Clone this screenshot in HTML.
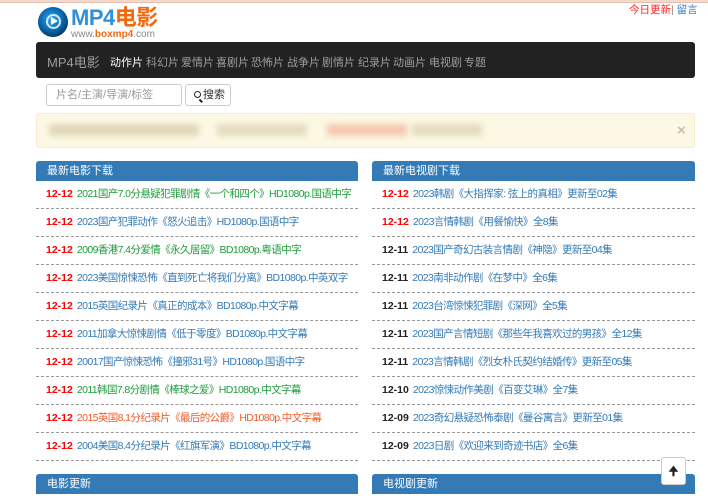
<!DOCTYPE html>
<html><head><meta charset="utf-8"><style>
*{margin:0;padding:0;box-sizing:border-box}
body{width:708px;height:500px;overflow:hidden;background:#fff;font-family:"Liberation Sans","Noto Sans CJK SC",sans-serif;font-size:11px;position:relative}
.topline{position:absolute;left:0;top:0;width:708px;height:3px;background:#f3d8cc;border-bottom:1px solid #e8c0b0}
.abs{position:absolute}
.nav{left:36px;top:42px;width:659px;height:36px;background:#222;border-radius:3px;color:#9d9d9d;font-size:11px}
.nav span{position:absolute;top:12px}
.panel{position:absolute;}
.ph{height:20px;background:#337ab7;color:#fff;border-radius:3px 3px 0 0;padding-left:11px;line-height:20px;font-size:11px}
.row{height:28px;border-bottom:1px dashed #999;line-height:27px;padding-left:10px;white-space:nowrap;font-size:10.5px;letter-spacing:-0.6px}
.d{font-weight:bold;color:#f00;margin-right:4px;letter-spacing:0}
.k{color:#222}
.g{color:#1f9c3c}.b{color:#337ab7}.o{color:#f05a28}
</style></head><body>
<div class="topline"></div>
<div class="abs" style="left:38px;top:7px;width:30px;height:30px;border-radius:50%;background:radial-gradient(circle at 45% 40%,#39a8e8 0,#0a6bb4 45%,#062f55 80%,#111 100%)"></div>
<div class="abs" style="left:46px;top:14px;width:15px;height:15px;border-radius:50%;border:2px solid #cfeaff"></div>
<div class="abs" style="left:51px;top:17px;width:0;height:0;border-left:7px solid #fff;border-top:4.5px solid transparent;border-bottom:4.5px solid transparent"></div>
<div class="abs" style="left:71px;top:4px;font-size:22px;font-weight:bold;color:#2f8fdc;letter-spacing:-0.5px;line-height:28px">MP4<span style="color:#f26a10">电影</span></div>
<div class="abs" style="left:71px;top:29px;font-size:10px;color:#888;line-height:12px">www.<span style="color:#f26a10;font-weight:bold">boxmp4</span>.com</div>
<div class="abs" style="left:629px;top:4px;font-size:10.5px;line-height:13px"><span style="color:#f22">今日更新</span><span style="color:#888">| </span><span style="color:#337ab7">留言</span></div>
<div class="abs nav">
<span style="left:11px;top:10px;font-size:13px">MP4电影</span>
<span style="left:74px;color:#fff">动作片</span><span style="left:110px">科幻片</span><span style="left:145px">爱情片</span><span style="left:180px">喜剧片</span><span style="left:215px">恐怖片</span><span style="left:251px">战争片</span><span style="left:286px">剧情片</span><span style="left:322px">纪录片</span><span style="left:357px">动画片</span><span style="left:393px">电视剧</span><span style="left:428px">专题</span>
</div>
<div class="abs" style="left:46px;top:84px;width:136px;height:22px;border:1px solid #ccc;border-radius:3px;color:#999;padding-left:9px;line-height:20px">片名/主演/导演/标签</div>
<div class="abs" style="left:185px;top:84px;width:46px;height:22px;border:1px solid #ccc;border-radius:3px;color:#333;line-height:20px;padding-left:8px"><span style="display:inline-block;width:7px;height:7px;border:1.5px solid #222;border-radius:50%;vertical-align:-0px;position:relative"></span><span style="display:inline-block;width:4px;height:1.5px;background:#222;transform:rotate(45deg);margin-left:-2px;vertical-align:-3px"></span>搜索</div>
<div class="abs" style="left:36px;top:113px;width:659px;height:35px;background:#fcf8e3;border:1px solid #faebcc;border-radius:3px">
<div class="abs" style="left:12px;top:10px;width:150px;height:12px;background:#e0d7b8;filter:blur(3px)"></div>
<div class="abs" style="left:180px;top:10px;width:90px;height:12px;background:#e4dcc0;filter:blur(3px)"></div>
<div class="abs" style="left:290px;top:10px;width:80px;height:12px;background:#f5c8b0;filter:blur(3px)"></div>
<div class="abs" style="left:375px;top:10px;width:70px;height:12px;background:#e4dcc0;filter:blur(3px)"></div>
<div class="abs" style="left:640px;top:8px;color:#c8c0a8;font-size:15px;font-weight:bold">×</div>
</div>
<div class="panel" style="left:36px;top:161px;width:322px">
<div class="ph">最新电影下载</div>
<div class="row"><span class="d">12-12</span><span class="g">2021国产7.0分悬疑犯罪剧情《一个和四个》HD1080p.国语中字</span></div>
<div class="row"><span class="d">12-12</span><span class="b">2023国产犯罪动作《怒火追击》HD1080p.国语中字</span></div>
<div class="row"><span class="d">12-12</span><span class="g">2009香港7.4分爱情《永久居留》BD1080p.粤语中字</span></div>
<div class="row"><span class="d">12-12</span><span class="b">2023美国惊悚恐怖《直到死亡将我们分离》BD1080p.中英双字</span></div>
<div class="row"><span class="d">12-12</span><span class="b">2015英国纪录片《真正的成本》BD1080p.中文字幕</span></div>
<div class="row"><span class="d">12-12</span><span class="b">2011加拿大惊悚剧情《低于零度》BD1080p.中文字幕</span></div>
<div class="row"><span class="d">12-12</span><span class="b">20017国产惊悚恐怖《撞邪31号》HD1080p.国语中字</span></div>
<div class="row"><span class="d">12-12</span><span class="g">2011韩国7.8分剧情《棒球之爱》HD1080p.中文字幕</span></div>
<div class="row"><span class="d">12-12</span><span class="o">2015英国8.1分纪录片《最后的公爵》HD1080p.中文字幕</span></div>
<div class="row"><span class="d">12-12</span><span class="b">2004美国8.4分纪录片《红旗军演》BD1080p.中文字幕</span></div>
</div>
<div class="panel" style="left:372px;top:161px;width:323px">
<div class="ph">最新电视剧下载</div>
<div class="row"><span class="d">12-12</span><span class="b">2023韩剧《大指挥家: 弦上的真相》更新至02集</span></div>
<div class="row"><span class="d">12-12</span><span class="b">2023言情韩剧《用餐愉快》全8集</span></div>
<div class="row"><span class="d k">12-11</span><span class="b">2023国产奇幻古装言情剧《神隐》更新至04集</span></div>
<div class="row"><span class="d k">12-11</span><span class="b">2023南非动作剧《在梦中》全6集</span></div>
<div class="row"><span class="d k">12-11</span><span class="b">2023台湾惊悚犯罪剧《深网》全5集</span></div>
<div class="row"><span class="d k">12-11</span><span class="b">2023国产言情短剧《那些年我喜欢过的男孩》全12集</span></div>
<div class="row"><span class="d k">12-11</span><span class="b">2023言情韩剧《烈女朴氏契约结婚传》更新至05集</span></div>
<div class="row"><span class="d k">12-10</span><span class="b">2023惊悚动作美剧《百变艾琳》全7集</span></div>
<div class="row"><span class="d k">12-09</span><span class="b">2023奇幻悬疑恐怖泰剧《曼谷寓言》更新至01集</span></div>
<div class="row"><span class="d k">12-09</span><span class="b">2023日剧《欢迎来到奇迹书店》全6集</span></div>
</div>
<div class="panel" style="left:36px;top:474px;width:322px"><div class="ph">电影更新</div></div>
<div class="panel" style="left:372px;top:474px;width:323px"><div class="ph">电视剧更新</div></div>
<div class="abs" style="left:661px;top:457px;width:25px;height:28px;background:#fff;border:1px solid #ccc;border-radius:3px;text-align:center;line-height:26px;font-size:12px;font-weight:bold;color:#222">🠉</div>
</body></html>
